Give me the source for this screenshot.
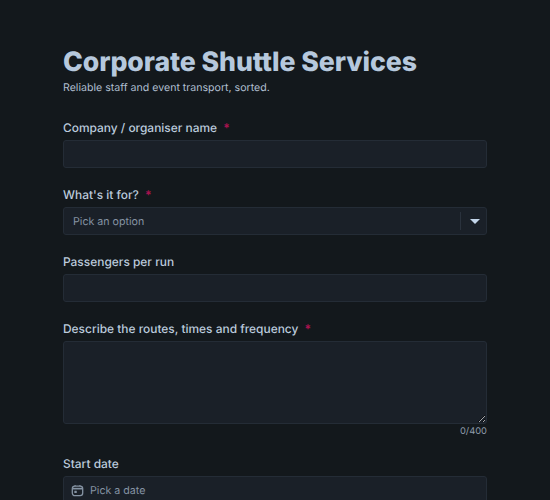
<main class="page">
  <header class="head">
    <h1>Corporate Shuttle Services</h1>
    <p>Reliable staff and event transport, sorted.</p>
  </header>

  <form class="form">
    <div class="field">
      <label for="company">Company / organiser name <span class="req">*</span></label>
      <input id="company" type="text" />
    </div>

    <div class="field">
      <label for="purpose">What's it for? <span class="req">*</span></label>
      <div id="purpose" class="select">
        <span class="ph">Pick an option</span>
        <span class="sep"></span>
        <span class="caret"></span>
      </div>
    </div>

    <div class="field">
      <label for="pax">Passengers per run</label>
      <input id="pax" type="text" />
    </div>

    <div class="field">
      <label for="routes">Describe the routes, times and frequency <span class="req">*</span></label>
      <div class="area">
        <textarea id="routes"></textarea>
        <div class="count">0/400</div>
      </div>
    </div>

    <div class="field">
      <label for="start">Start date</label>
      <div id="start" class="date">
        <svg viewBox="0 0 14 14" width="13" height="13" fill="none" stroke="currentColor" stroke-width="1.4" aria-hidden="true">
          <rect x="1.4" y="2.2" width="11.2" height="10.4" rx="2.8" />
          <path d="M1.6 5h10.8" stroke-width="1.8" />
          <path d="M4.4 1v1.4M9.6 1v1.4" stroke-width="1.1" />
          <rect x="3.6" y="7.2" width="2.6" height="2.6" rx="0.4" fill="currentColor" stroke="none" />
        </svg>
        <span class="ph">Pick a date</span>
      </div>
    </div>
  </form>
</main>

<style>
  :global(body) {
    margin: 0;
    background: #13181c;
    font-family: Inter, "Liberation Sans", sans-serif;
    color: #c3d2e3;
    text-rendering: geometricPrecision;
  }
  .page {
    box-sizing: border-box;
    width: 550px;
    height: 500px;
    overflow: hidden;
    padding: 44px 63px 0;
  }
  .head {
    margin-bottom: 26px;
  }
  h1 {
    margin: 0;
    font-size: 26.67px;
    line-height: 36px;
    font-weight: 800;
    letter-spacing: -0.07px;
    color: #b6c8dd;
  }
  .head p {
    margin: 0;
    font-size: 10.6px;
    line-height: 15px;
    color: #b0bfd0;
  }
  .form {
    display: flex;
    flex-direction: column;
    gap: 20px;
  }
  .field {
    display: flex;
    flex-direction: column;
    gap: 5px;
  }
  label {
    font-size: 11.93px;
    line-height: 14px;
    font-weight: 500;
    color: #bccbdc;
  }
  .req {
    color: #a8134f;
    font-weight: 700;
    margin-left: 3px;
  }
  input,
  textarea,
  .select,
  .date {
    box-sizing: border-box;
    width: 100%;
    background: #1a2028;
    border: 1px solid #242c36;
    border-radius: 3px;
    color: #c3d2e3;
    font: inherit;
    outline: none;
  }
  input,
  .select,
  .date {
    height: 28px;
  }
  .area {
    display: flex;
    flex-direction: column;
    gap: 2px;
  }
  textarea {
    display: block;
    height: 83px;
    resize: vertical;
  }
  .select,
  .date {
    display: flex;
    align-items: center;
  }
  .select {
    padding-left: 9px;
  }
  .ph {
    font-size: 10.67px;
    color: #8593a3;
  }
  .select .ph {
    flex: 1;
  }
  .sep {
    width: 1px;
    height: 18px;
    background: #2a323d;
  }
  .caret {
    width: 0;
    height: 0;
    margin: 0 6px 0 9px;
    border-left: 5px solid transparent;
    border-right: 5px solid transparent;
    border-top: 5px solid #c3d5ea;
  }
  .date {
    gap: 6px;
    padding-left: 7px;
    color: #8593a3;
  }
  .count {
    text-align: right;
    font-size: 9.33px;
    line-height: 11px;
    color: #8f9cab;
  }
</style>
